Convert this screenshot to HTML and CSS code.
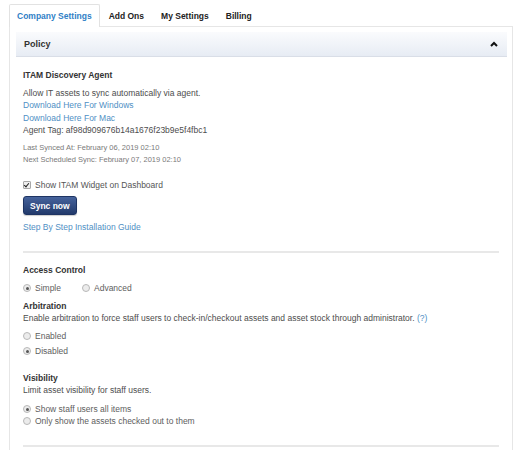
FILE: index.html
```html
<!DOCTYPE html>
<html lang="en">
<head>
    <meta charset="UTF-8">
    <title>Company Settings</title>
    <link rel="stylesheet" href="styles.css">
</head>
<body>
<div class="page">
    <nav class="tabs">
        <a href="javascript://" class="tab cur">Company Settings</a>
        <a href="javascript://" class="tab">Add Ons</a>
        <a href="javascript://" class="tab">My Settings</a>
        <a href="javascript://" class="tab">Billing</a>
    </nav>
    <div class="tab-cont">
        <div class="panel">
            <div class="panel-head">
                <span>Policy</span>
                <svg class="caret" width="8" height="6" viewBox="0 0 8 6"><polyline points="1,5 4,2 7,5" fill="none" stroke="#111" stroke-width="2"/></svg>
            </div>
            <div class="panel-body">
                <h3 class="title first">ITAM Discovery Agent</h3>
                <div class="lines">
                    <p>Allow IT assets to sync automatically via agent.</p>
                    <p><a href="javascript://">Download Here For Windows</a></p>
                    <p><a href="javascript://">Download Here For Mac</a></p>
                    <p>Agent Tag: af98d909676b14a1676f23b9e5f4fbc1</p>
                </div>
                <div class="small">
                    <p>Last Synced At: February 06, 2019 02:10</p>
                    <p>Next Scheduled Sync: February 07, 2019 02:10</p>
                </div>
                <label class="check-row"><span class="checkbox"></span>Show ITAM Widget on Dashboard</label>
                <button class="btn">Sync now</button>
                <p class="guide"><a href="javascript://">Step By Step Installation Guide</a></p>

                <div class="sep"></div>

                <h3 class="title access">Access Control</h3>
                <div class="inline-radios">
                    <label class="radio-row"><span class="radio on"></span>Simple</label>
                    <label class="radio-row"><span class="radio"></span>Advanced</label>
                </div>
                <h3 class="title sub">Arbitration</h3>
                <p class="desc">Enable arbitration to force staff users to check-in/checkout assets and asset stock through administrator. <a href="javascript://">(?)</a></p>
                <div class="radios tall">
                    <label class="radio-row"><span class="radio"></span>Enabled</label>
                    <label class="radio-row"><span class="radio on"></span>Disabled</label>
                </div>

                <h3 class="title vis">Visibility</h3>
                <p class="desc">Limit asset visibility for staff users.</p>
                <div class="radios">
                    <label class="radio-row"><span class="radio on"></span>Show staff users all items</label>
                    <label class="radio-row"><span class="radio"></span>Only show the assets checked out to them</label>
                </div>

                <div class="sep last"></div>
            </div>
        </div>
    </div>
</div>
</body>
</html>
```

FILE: styles.css
```css
body,div,nav,a,p,h3,label,button{
    margin: 0;
    padding: 0;
}
body{
    font-family: "Liberation Sans", Arial, sans-serif;
    font-size: 8.5px;
    color: #4d4d4d;
    background: #fff;
}
a{
    color: #4f8fc4;
    text-decoration: none;
}
.page{
    padding: 4px 9px 0 9px;
}
.tabs{
    display: flex;
    height: 23px;
}
.tab{
    display: block;
    height: 22px;
    line-height: 22px;
    padding: 0 7px;
    margin-right: 1px;
    border: 1px solid transparent;
    border-bottom: none;
    border-radius: 2px 2px 0 0;
    font-weight: bold;
    color: #222;
}
.tab.cur{
    color: #2f80c6;
    background: #fff;
    border-color: #e2e2e2;
    position: relative;
    z-index: 1;
}
.tab-cont{
    border: 1px solid #e6e6e6;
    border-bottom: none;
    margin-top: -1px;
    padding: 5px 5px 0 6px;
    height: 440px;
}
.panel-head{
    display: flex;
    justify-content: space-between;
    align-items: center;
    height: 24px;
    padding: 0 8px 0 8px;
    background: linear-gradient(#fafbfd, #e7ecf4);
    border-bottom: 1px solid #d9dee7;
    font-weight: bold;
    font-size: 9px;
    color: #333;
}
.caret{
    display: block;
    margin-right: 1px;
}
.panel-body{
    padding: 0 8px 0 7px;
}
.title{
    font-size: 8.5px;
    line-height: 12px;
    font-weight: bold;
    color: #333;
}
.title.first{
    margin-top: 12px;
}
.lines{
    margin-top: 6px;
    line-height: 12.4px;
}
.small{
    margin-top: 5.5px;
    font-size: 7.5px;
    line-height: 12px;
    color: #7a7a7a;
}
.check-row{
    display: flex;
    align-items: center;
    margin-top: 13px;
    line-height: 12px;
    color: #555;
}
.checkbox{
    width: 6px;
    height: 6px;
    margin-right: 4px;
    border: 1px solid #a8a8a8;
    border-radius: 1px;
    background: #eee;
    position: relative;
}
.checkbox::after{
    content: "";
    position: absolute;
    left: 1px;
    top: 0;
    width: 2px;
    height: 4px;
    border: solid #222;
    border-width: 0 1.3px 1.3px 0;
    transform: rotate(40deg);
}
.btn{
    display: block;
    margin-top: 5px;
    height: 19px;
    padding: 0 6px;
    border: 1px solid #1e3463;
    border-radius: 3px;
    background: linear-gradient(#46639c, #223a6b);
    color: #fff;
    font-family: "Liberation Sans", Arial, sans-serif;
    font-size: 8.5px;
    font-weight: bold;
    box-shadow: 0 1px 1px rgba(0,0,0,0.2);
}
.guide{
    margin-top: 6px;
    line-height: 12px;
}
.sep{
    height: 2px;
    background: #e8e8e8;
    margin-top: 18px;
}
.title.access{
    margin-top: 11px;
}
.inline-radios{
    display: flex;
    margin-top: 6px;
    line-height: 12px;
}
.inline-radios .radio-row{
    margin-right: 21px;
}
.radio-row{
    display: flex;
    align-items: center;
    color: #5e5e5e;
}
.radio{
    width: 6px;
    height: 6px;
    margin-right: 4px;
    border: 1px solid #b8b8b8;
    border-radius: 50%;
    background: #ececec;
    position: relative;
}
.radio.on::after{
    content: "";
    position: absolute;
    left: 1.5px;
    top: 1.5px;
    width: 3px;
    height: 3px;
    border-radius: 50%;
    background: #555;
}
.title.sub{
    margin-top: 6px;
}
.desc{
    line-height: 12px;
}
.radios{
    margin-top: 7px;
    line-height: 12px;
}
.radios.tall{
    margin-top: 4.5px;
    line-height: 15px;
}
.title.vis{
    margin-top: 13.5px;
}
.sep.last{
    margin-top: 18px;
}
```
